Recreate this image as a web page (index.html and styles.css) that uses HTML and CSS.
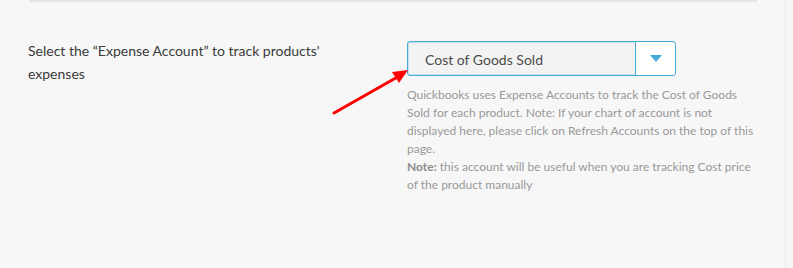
FILE: index.html
```html
<!DOCTYPE html>
<html>
<head>
<meta charset="utf-8">
<link rel="stylesheet" href="styles.css">
</head>
<body>
<div class="page">
  <div class="top-rule"></div>
  <div class="row">
    <div class="label-col">
      <p class="label">Select the “Expense Account” to track products' expenses</p>
    </div>
    <div class="field-col">
      <div class="select">
        <span class="select-value">Cost of Goods Sold</span>
        <span class="select-btn"><span class="caret"></span></span>
      </div>
      <p class="help">Quickbooks uses Expense Accounts to track the Cost of Goods Sold for each product. Note: If your chart of account is not displayed here, please click on Refresh Accounts on the top of this page.<br><strong>Note:</strong> this account will be useful when you are tracking Cost price of the product manually</p>
    </div>
  </div>
  <svg class="annot-arrow" width="90" height="60" viewBox="0 0 90 60">
    <line x1="3" y1="49" x2="70" y2="11" stroke="#ff0000" stroke-width="3" stroke-linecap="round"/>
    <polygon points="77,6 61,8 68,19" fill="#ff0000"/>
  </svg>
</div>
</body>
</html>
```
FILE: styles.css
```css
html, body {
  margin: 0;
  padding: 0;
  background: #f7f7f7;
}
.page {
  position: relative;
  width: 785px;
  height: 268px;
  border-right: 1px solid #ececec;
  font-family: Lato, "Open Sans", sans-serif;
}
.top-rule {
  margin: 0 28px 0 29px;
  height: 2px;
  background: #e4e4e4;
}
.row {
  display: flex;
  margin-top: 37px;
}
.label-col {
  width: 351px;
  padding-left: 28px;
}
.label {
  margin: 0;
  font-size: 14px;
  line-height: 23px;
  color: #3a3a3a;
  width: 320px;
}
.field-col {
  width: 352px;
  padding-left: 28px;
}
.select {
  margin-top: 2px;
  width: 267px;
  height: 33px;
  display: flex;
  border: 1px solid #4aaad9;
  border-radius: 3px;
  background: #f3f3f3;
  box-shadow: inset 0 0 0 1px rgba(74,170,217,0.25);
}
.select-value {
  flex: 1;
  padding-left: 17px;
  padding-top: 3px;
  font-size: 14px;
  line-height: 30px;
  color: #4a4a4a;
}
.select-btn {
  width: 39px;
  border-left: 1px solid #4aaad9;
  background: #ffffff;
  border-radius: 0 3px 3px 0;
  display: flex;
  align-items: center;
  justify-content: center;
}
.caret {
  width: 0;
  height: 0;
  border-left: 6px solid transparent;
  border-right: 6px solid transparent;
  border-top: 7px solid #4aaad9;
}
.help {
  margin: 10px 0 0;
  font-size: 12px;
  line-height: 18px;
  color: #999999;
}
.help strong {
  color: #8c8c8c;
  font-weight: 700;
}
.annot-arrow {
  position: absolute;
  left: 331px;
  top: 64px;
}
```
